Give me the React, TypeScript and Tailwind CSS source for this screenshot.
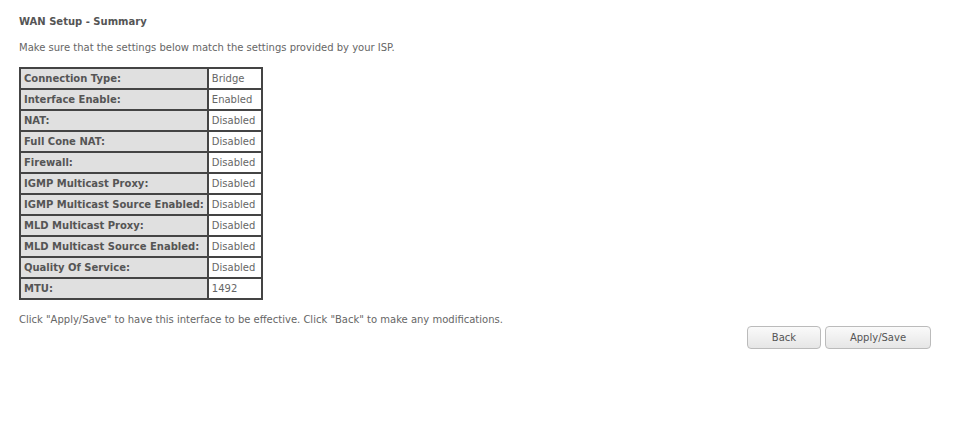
const rows: [string, string][] = [
  ["Connection Type:", "Bridge"],
  ["Interface Enable:", "Enabled"],
  ["NAT:", "Disabled"],
  ["Full Cone NAT:", "Disabled"],
  ["Firewall:", "Disabled"],
  ["IGMP Multicast Proxy:", "Disabled"],
  ["IGMP Multicast Source Enabled:", "Disabled"],
  ["MLD Multicast Proxy:", "Disabled"],
  ["MLD Multicast Source Enabled:", "Disabled"],
  ["Quality Of Service:", "Disabled"],
  ["MTU:", "1492"],
]

export default function App() {
  return (
    <div className="min-h-[432px] bg-white pl-[19px] pt-[15px] font-['DejaVu_Sans',sans-serif] text-[10px] text-[#666]">
      <div className="w-[912px]">
        <div className="font-bold leading-[13px] text-[#555]">WAN Setup - Summary</div>
        <p className="mt-[13px] leading-[13px]">
          Make sure that the settings below match the settings provided by your ISP.
        </p>

        <table className="mt-[13px] border-separate border-spacing-0 border border-[#444]">
          <tbody>
            {rows.map(([label, value]) => (
              <tr key={label}>
                <td className="h-[21px] border border-[#444] bg-[#e0e0e0] px-[3px] py-0 font-bold leading-[19px] text-[#555]">
                  {label}
                </td>
                <td className="h-[21px] w-[54px] border border-[#444] bg-white pl-[3px] pr-0 py-0 leading-[19px] text-[#666]">
                  {value}
                </td>
              </tr>
            ))}
          </tbody>
        </table>

        <p className="mt-[13px] leading-[13px]">
          Click "Apply/Save" to have this interface to be effective. Click "Back" to make any modifications.
        </p>

        <div className="flex justify-end gap-[4px]">
          <button className="h-[23px] w-[74px] rounded-[4px] border border-[#bbb] bg-gradient-to-b from-[#fafafa] to-[#e6e6e6] text-[10px] text-[#555]">
            Back
          </button>
          <button className="h-[23px] w-[106px] rounded-[4px] border border-[#bbb] bg-gradient-to-b from-[#fafafa] to-[#e6e6e6] text-[10px] text-[#555]">
            Apply/Save
          </button>
        </div>
      </div>
    </div>
  )
}
